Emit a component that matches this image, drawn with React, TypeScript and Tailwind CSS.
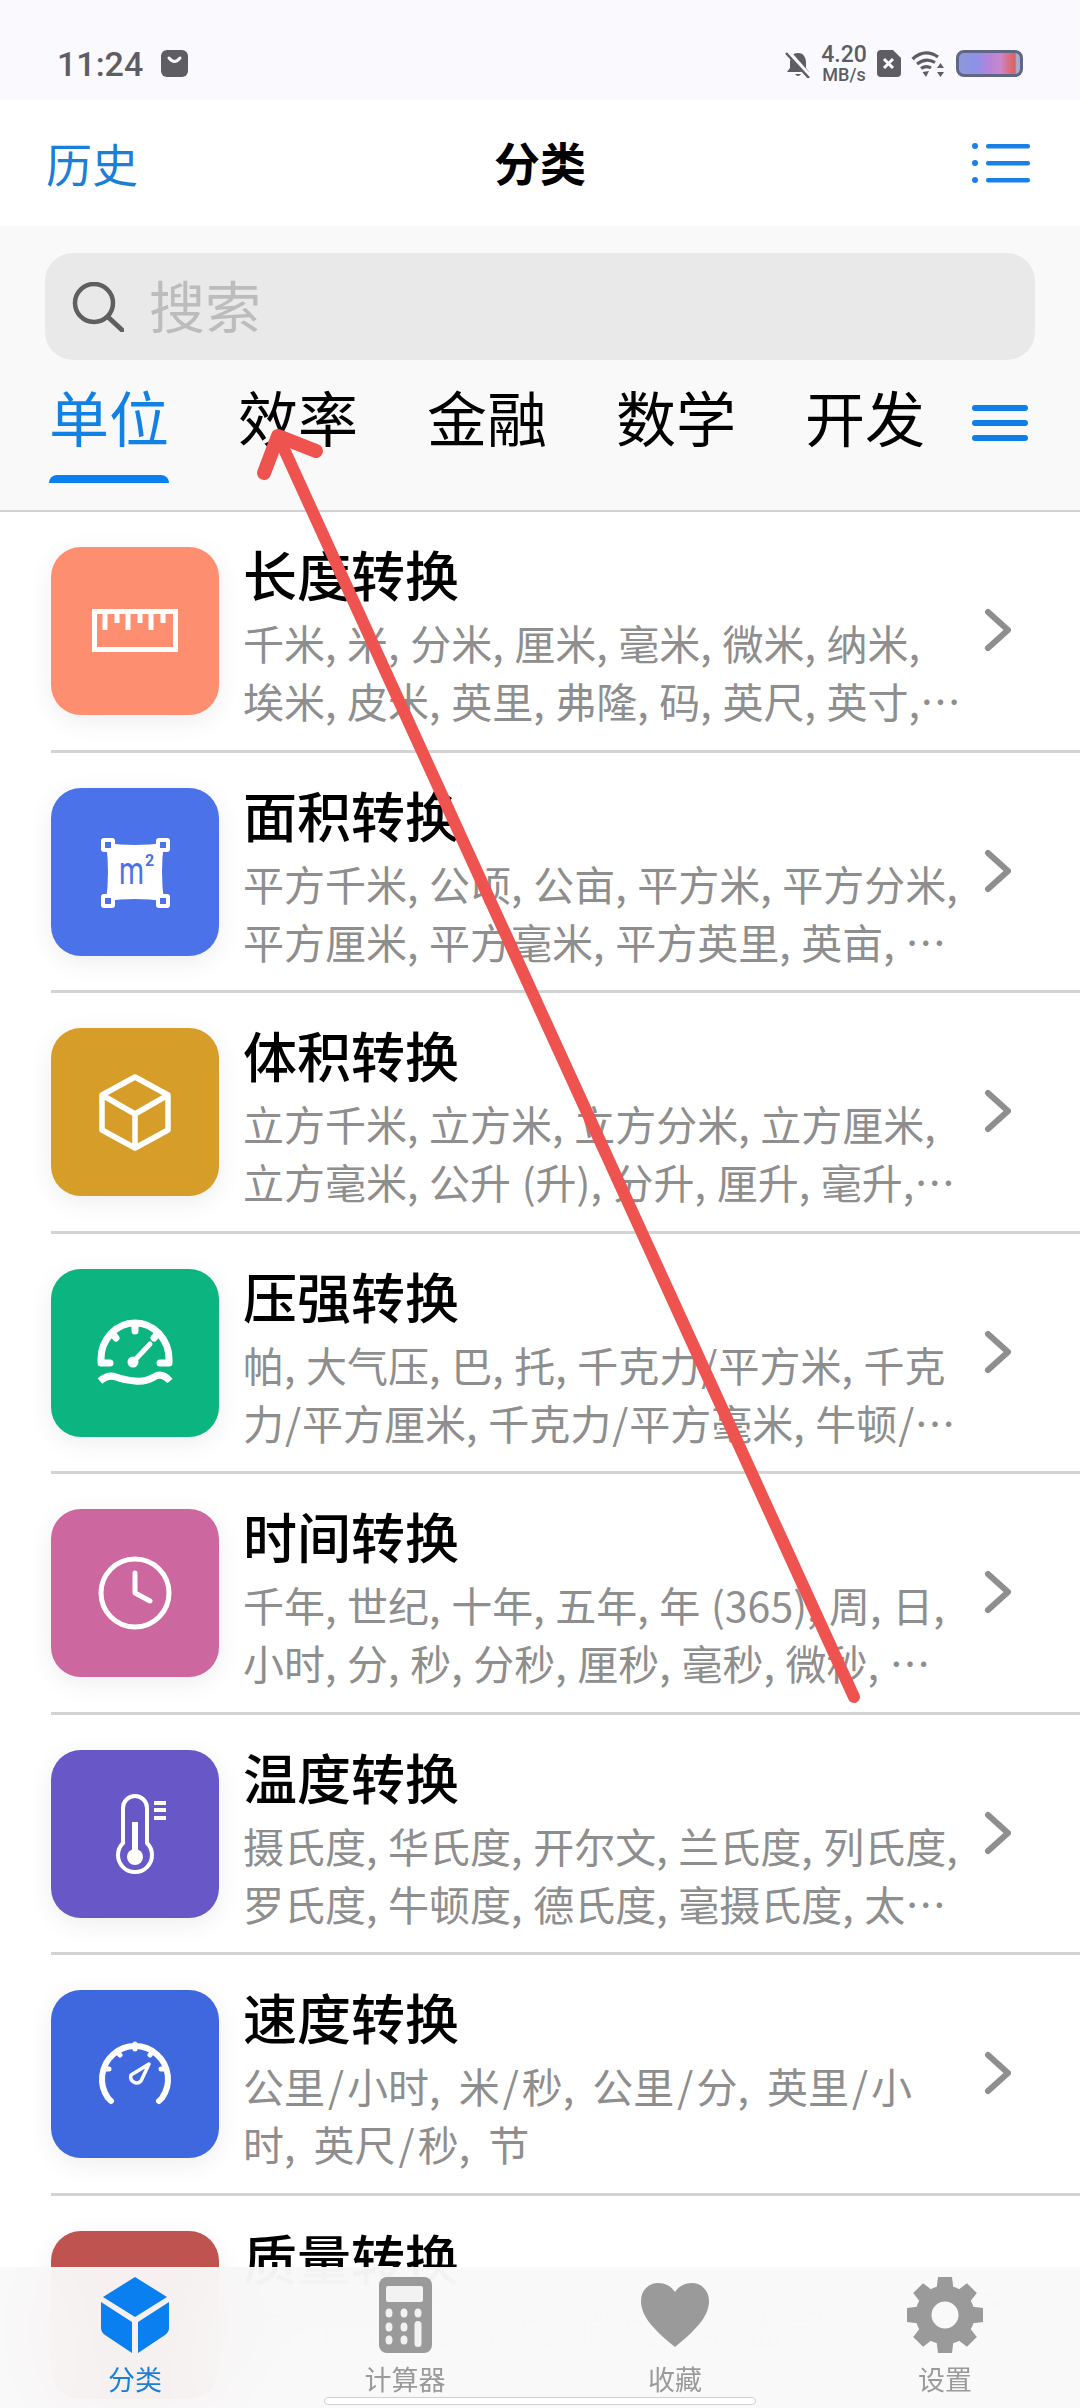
import type { ReactNode } from "react";

function RulerIcon() {
  return (
    <g fill="none" stroke="#fff" strokeWidth="5">
      <rect x="43.5" y="64.5" width="81" height="38" />
      <path d="M54 66v17M66 66v10M77 66v17M89 66v10M100 66v17M112 66v10" />
    </g>
  );
}

function AreaIcon({ color }: { color: string }) {
  const corners = [
    [50, 50],
    [105, 50],
    [50, 106],
    [105, 106],
  ];
  return (
    <g>
      <path d="M55 55Q84 59 113 55Q109 84 113 113Q84 109 55 113Q59 84 55 55Z" fill="#fff" />
      {corners.map(([x, y]) => (
        <g key={`${x}-${y}`}>
          <rect x={x} y={y} width="14" height="14" rx="3" fill="#fff" />
          <rect x={x + 4} y={y + 4} width="6" height="6" fill={color} />
        </g>
      ))}
      <text x="68" y="96" fontSize="38" textLength="25" lengthAdjust="spacingAndGlyphs" fill={color} fontFamily="Roboto, sans-serif">
        m
      </text>
      <text x="94" y="78" fontSize="16" fontWeight="700" fill={color} fontFamily="Roboto, sans-serif">
        2
      </text>
    </g>
  );
}

function BoxIcon() {
  return (
    <path
      d="M84 49L117 67V102L84 120L51 102V67ZM51 67L84 86L117 67M84 86V120"
      fill="none"
      stroke="#fff"
      strokeWidth="5.5"
      strokeLinejoin="round"
    />
  );
}

function PressureIcon() {
  return (
    <g fill="none" stroke="#fff" strokeWidth="7" strokeLinecap="round">
      <path d="M59 94H50V90A34 36 0 0 1 118 90V94H109" strokeLinejoin="round" />
      <path d="M84 55V62M61 64L65 69M107 64L103 69" />
      <path d="M83 92L99 75" strokeWidth="5" />
      <circle cx="82" cy="93" r="4" fill="#fff" strokeWidth="3" />
      <path d="M49 112Q57 105 65 108T84 112T103 108T119 112" strokeLinecap="butt" />
    </g>
  );
}

function ClockIcon() {
  return (
    <g fill="none" stroke="#fff" strokeWidth="5" strokeLinecap="round" strokeLinejoin="round">
      <circle cx="84" cy="84" r="34" />
      <path d="M84 64V84L99 92" />
    </g>
  );
}

function ThermometerIcon() {
  return (
    <g fill="none" stroke="#fff" strokeLinecap="round">
      <path d="M72 93V58A12 12 0 0 1 96 58V93A17 17 0 1 1 72 93Z" strokeWidth="4" />
      <path d="M84 72V105" strokeWidth="6" strokeLinecap="butt" />
      <circle cx="84" cy="107" r="8" fill="#fff" strokeWidth="0" />
      <path d="M103 53H115M103 60H115M103 68H115" strokeWidth="4" strokeLinecap="butt" />
    </g>
  );
}

function SpeedIcon() {
  return (
    <g fill="none" stroke="#fff" strokeLinecap="round" strokeLinejoin="round">
      <path d="M60 111L57 108A33 33 0 1 1 111 108L108 111" strokeWidth="6" />
      <path
        d="M84 53V58M66 60L69 64M102 60L99 64M54 78H58M114 78H110"
        strokeWidth="5"
        transform="translate(0 1)"
      />
      <path d="M98 74L90 91A6 6 0 0 1 80 85Z" strokeWidth="3.5" />
    </g>
  );
}

function MassIcon() {
  return null;
}

const rows: { title: string; desc: string; bg: string; icon: ReactNode; wide?: boolean }[] = [
  {
    title: "长度转换",
    desc: "千米, 米, 分米, 厘米, 毫米, 微米, 纳米, 埃米, 皮米, 英里, 弗隆, 码, 英尺, 英寸, 海里, 光年",
    bg: "bg-[#fe8e70]",
    icon: <RulerIcon />,
  },
  {
    title: "面积转换",
    desc: "平方千米, 公顷, 公亩, 平方米, 平方分米, 平方厘米, 平方毫米, 平方英里, 英亩, 平方码, 平方英尺",
    bg: "bg-[#4b72e8]",
    icon: <AreaIcon color="#4b72e8" />,
  },
  {
    title: "体积转换",
    desc: "立方千米, 立方米, 立方分米, 立方厘米, 立方毫米, 公升 (升), 分升, 厘升, 毫升, 微升, 加仑",
    bg: "bg-[#d69e28]",
    icon: <BoxIcon />,
  },
  {
    title: "压强转换",
    desc: "帕, 大气压, 巴, 托, 千克力/平方米, 千克力/平方厘米, 千克力/平方毫米, 牛顿/平方米, 牛顿/平方厘米",
    bg: "bg-[#0cb57f]",
    icon: <PressureIcon />,
  },
  {
    title: "时间转换",
    desc: "千年, 世纪, 十年, 五年, 年 (365), 周, 日, 小时, 分, 秒, 分秒, 厘秒, 毫秒, 微秒, 纳秒, 皮秒",
    bg: "bg-[#cd679f]",
    icon: <ClockIcon />,
  },
  {
    title: "温度转换",
    desc: "摄氏度, 华氏度, 开尔文, 兰氏度, 列氏度, 罗氏度, 牛顿度, 德氏度, 毫摄氏度, 太阳温度, 普朗克",
    bg: "bg-[#6857c6]",
    icon: <ThermometerIcon />,
  },
  {
    title: "速度转换",
    desc: "公里/小时, 米/秒, 公里/分, 英里/小\n时, 英尺/秒, 节",
    bg: "bg-[#3f68de]",
    icon: <SpeedIcon />,
    wide: true,
  },
  {
    title: "质量转换",
    desc: "吨, 千克, 克, 毫克, 微克, 磅, 盎司",
    bg: "bg-[#bf5350]",
    icon: <MassIcon />,
  },
];

function StatusBar() {
  return (
    <div className="flex h-[100px] shrink-0 items-center justify-between bg-[#f9f9fe] pl-[57px] pr-[57px] pt-[27px] text-[#5e5d63]">
      <div className="flex items-center gap-[18px]">
        <span className="font-['Roboto',sans-serif] text-[34px] font-medium leading-none">11:24</span>
        <svg width="27" height="27" viewBox="0 0 27 27">
          <rect width="27" height="27" rx="6" fill="#5e5d63" />
          <path d="M8 8Q13.5 15 19 8" fill="none" stroke="#f9f9fe" strokeWidth="3" strokeLinecap="round" />
        </svg>
      </div>
      <div className="flex items-center">
        <svg width="28" height="28" viewBox="0 0 28 28" className="mr-[9px]">
          <path d="M14 3C8 3 6 8 6 13V18L3 22H25L22 18V13C22 8 20 3 14 3ZM11 24H17Q14 28 11 24Z" fill="#5e5d63" />
          <path d="M3 1L26 27" stroke="#f9f9fe" strokeWidth="5" />
          <path d="M2 3L25 28" stroke="#5e5d63" strokeWidth="2.5" />
        </svg>
        <div className="mr-[10px] flex w-[46px] flex-col items-center font-['Roboto',sans-serif] font-medium">
          <span className="text-[23px] leading-[22px]">4.20</span>
          <span className="text-[18px] leading-[17px]">MB/s</span>
        </div>
        <svg width="24" height="28" viewBox="0 0 24 28" className="mr-[10px]">
          <path d="M4 0H16L24 8V23A4 4 0 0 1 20 27H4A4 4 0 0 1 0 23V4A4 4 0 0 1 4 0Z" fill="#5e5d63" />
          <path d="M7 9L16 18M16 9L7 18" stroke="#f9f9fe" strokeWidth="3" />
        </svg>
        <svg width="34" height="28" viewBox="0 0 34 28" className="mr-[11px]">
          <g fill="none" stroke="#5e5d63" strokeWidth="3.2">
            <path d="M1.5 9Q14 -2 27 7" />
            <path d="M6 14Q15 7 24 12.5" />
            <path d="M10 18.5Q15 15 20 18" />
          </g>
          <path d="M11.5 22L18 21L15 27Z" fill="#5e5d63" />
          <path d="M29.5 13L33 18H26ZM29.5 27L33 22H26Z" fill="#5e5d63" />
        </svg>
        <div className="h-[27px] w-[67px] rounded-[8px] border-[3px] border-[#5f6785] bg-[linear-gradient(90deg,#8e9ad6_0%,#8f8fe8_30%,#b784d8_50%,#c987cf_68%,#dd6a6f_85%,#d9626a_92%,#a9a8cf_94%,#a9a8cf_100%)]" />
      </div>
    </div>
  );
}

function Header() {
  return (
    <header className="grid h-[126px] shrink-0 grid-cols-[1fr_auto_1fr] items-center bg-white px-[48px]">
      <span className="-ml-[2px] -mt-[3px] text-[46px] leading-none text-[#1a7fd8]">历史</span>
      <span className="-mt-[4px] text-[46px] font-bold leading-none text-black">分类</span>
      <svg width="58" height="42" viewBox="0 0 58 42" className="mr-[2px] justify-self-end">
        <g fill="#1a7fe6">
          <circle cx="3" cy="4" r="3" />
          <circle cx="3" cy="21" r="3" />
          <circle cx="3" cy="38" r="3" />
          <rect x="14" y="2" width="44" height="4.5" rx="2" />
          <rect x="14" y="19" width="44" height="4.5" rx="2" />
          <rect x="14" y="36" width="44" height="4.5" rx="2" />
        </g>
      </svg>
    </header>
  );
}

function SearchAndTabs() {
  const tabs = ["单位", "效率", "金融", "数学", "开发"];
  return (
    <div className="h-[286px] shrink-0 border-b-2 border-[#d2d2d2] bg-[#f9f9f9] pt-[27px]">
      <div className="mx-[45px] flex h-[107px] items-center rounded-[28px] bg-[#e9e9e9] pl-[27px]">
        <svg width="52" height="50" viewBox="0 0 52 50" fill="none" stroke="#5f5f5f" strokeWidth="4.5" strokeLinecap="round">
          <circle cx="22" cy="21" r="19" />
          <path d="M36 35L50 48" strokeWidth="5" />
        </svg>
        <span className="-mt-[6px] ml-[25px] text-[56px] leading-none text-[#bcbcbc]">搜索</span>
      </div>
      <div className="flex pl-[49px] pr-[52px] pt-[21px]">
        <div className="flex gap-[69px]">
          {tabs.map((tab, i) => (
            <div key={tab} className="flex flex-col">
              <span className={`text-[60px] leading-[70px] ${i === 0 ? "text-[#1181e6]" : "text-black"}`}>{tab}</span>
              {i === 0 && <div className="mt-[24px] h-[8px] rounded-t-[8px] bg-[#0a7ff0]" />}
            </div>
          ))}
        </div>
        <div className="ml-auto mt-[24px] flex h-[36px] w-[56px] flex-col justify-between">
          <div className="h-[6px] rounded-full bg-[#0f7fe8]" />
          <div className="h-[6px] rounded-full bg-[#0f7fe8]" />
          <div className="h-[6px] rounded-full bg-[#0f7fe8]" />
        </div>
      </div>
    </div>
  );
}

function Row({ title, desc, bg, icon, wide }: (typeof rows)[number]) {
  const parts = desc.split("/");
  return (
    <div className="ml-[51px] flex h-[240.5px] shrink-0 items-start border-b-[3px] border-[#d3d3d3] pt-[35px]">
      <div className={`h-[168px] w-[168px] shrink-0 rounded-[30px] shadow-[0_6px_26px_rgba(0,0,0,0.07)] ${bg}`}>
        <svg width="168" height="168" viewBox="0 0 168 168">
          {icon}
        </svg>
      </div>
      <div className="-mt-[3px] ml-[24px] w-[719px] shrink-0">
        <div className="text-[54px] font-medium leading-[60px] text-black">{title}</div>
        <div className={`mt-[9px] line-clamp-2 whitespace-pre-line text-[41px] leading-[58px] text-[#8e8e8e] ${wide ? "[word-spacing:9px]" : "[word-spacing:1.5px]"}`}>
          {parts.map((part, i) => (
            <span key={i}>
              {i > 0 && <span className={wide ? "mx-[3px]" : "mx-[1px]"}>/</span>}
              {part}
            </span>
          ))}
        </div>
      </div>
      <svg width="28" height="44" viewBox="0 0 28 44" className="ml-[22px] mt-[61px] shrink-0" fill="none" stroke="#8e8e8e" strokeWidth="6" strokeLinecap="round" strokeLinejoin="round">
        <path d="M4 4L24 22L4 40" />
      </svg>
    </div>
  );
}

function BottomNav() {
  const gearTeeth = [0, 45, 90, 135, 180, 225, 270, 315];
  const keys = [
    [10, 36],
    [25, 36],
    [39, 36],
    [10, 50],
    [25, 50],
    [10, 63],
    [25, 63],
  ];
  return (
    <nav className="absolute inset-x-0 bottom-0 grid h-[141px] grid-cols-4 bg-[#f9f9f9]/95 pt-[10px] backdrop-blur-2xl">
      <div className="flex flex-col items-center">
        <svg width="68" height="76" viewBox="0 0 68 76" fill="#0a7ff0">
          <path d="M34 0L66 20L34 40L2 20Z" />
          <path d="M0 25L31 45V76L4 58Q0 55 0 51ZM68 25L37 45V76L64 58Q68 55 68 51Z" />
        </svg>
        <span className="mt-[8px] text-[27px] leading-[36px] text-[#1a7fd8]">分类</span>
      </div>
      <div className="flex flex-col items-center">
        <svg width="53" height="76" viewBox="0 0 53 76">
          <rect width="53" height="76" rx="8" fill="#9a9a9a" />
          <rect x="7" y="9" width="37" height="16" rx="2" fill="#f2f2f2" />
          {keys.map(([cx, cy]) => (
            <ellipse key={`${cx}-${cy}`} cx={cx} cy={cy} rx="3.5" ry="4.5" fill="#f2f2f2" />
          ))}
          <rect x="35.5" y="44" width="7" height="26" rx="3.5" fill="#f2f2f2" />
        </svg>
        <span className="mt-[8px] text-[27px] leading-[36px] text-[#9a9a9a]">计算器</span>
      </div>
      <div className="flex flex-col items-center">
        <svg width="70" height="76" viewBox="0 0 70 76" fill="#9a9a9a">
          <path d="M35 70C10 50 1 37 1 24C1 13 9 6 18 6C25 6 31 9 35 15C39 9 45 6 52 6C61 6 69 13 69 24C69 37 60 50 35 70Z" />
        </svg>
        <span className="mt-[8px] text-[27px] leading-[36px] text-[#9a9a9a]">收藏</span>
      </div>
      <div className="flex flex-col items-center">
        <svg width="76" height="76" viewBox="0 0 76 76" fill="#9a9a9a">
          {gearTeeth.map((deg) => (
            <path key={deg} d="M31 0H45L47 16H29Z" transform={`rotate(${deg} 38 38)`} />
          ))}
          <circle cx="38" cy="38" r="21.5" fill="none" stroke="#9a9a9a" strokeWidth="16" />
        </svg>
        <span className="mt-[8px] text-[27px] leading-[36px] text-[#9a9a9a]">设置</span>
      </div>
      <div className="absolute bottom-[3px] left-[324px] h-[8px] w-[432px] rounded-full border border-[#d0d0d0] bg-white" />
    </nav>
  );
}

export default function App() {
  return (
    <div className="relative flex h-[2408px] w-[1080px] flex-col overflow-hidden bg-white font-['Noto_Sans_CJK_SC','Liberation_Sans',sans-serif]">
      <StatusBar />
      <Header />
      <SearchAndTabs />
      <main className="flex flex-1 flex-col overflow-hidden">
        {rows.map((row) => (
          <Row key={row.title} {...row} />
        ))}
      </main>
      <BottomNav />
      {/* red annotation arrow drawn over the screenshot */}
      <svg className="pointer-events-none absolute inset-0" width="1080" height="2408" viewBox="0 0 1080 2408" fill="none" stroke="#ef5350" strokeLinecap="round" strokeLinejoin="round">
        <path d="M854 1697L278 436" strokeWidth="12" />
        <path d="M264 473L278 436L316 451" strokeWidth="14" />
      </svg>
    </div>
  );
}
